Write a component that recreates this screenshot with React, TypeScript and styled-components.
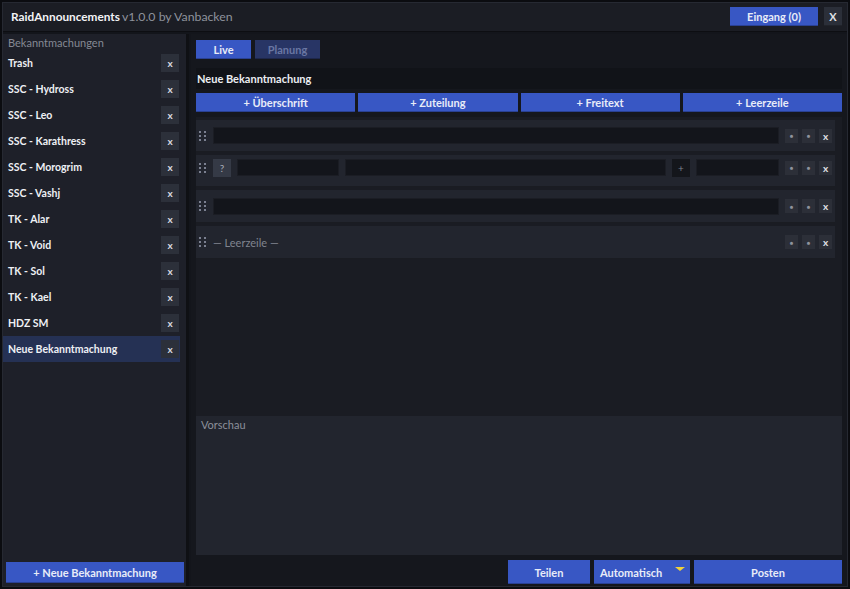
import React from "react";
import styled, { createGlobalStyle } from "styled-components";

const GlobalStyle = createGlobalStyle`
  html, body {
    margin: 0;
    padding: 0;
    background: #0b0c10;
  }
  body {
    font-family: "Lato", "Open Sans", "Liberation Sans", sans-serif;
    color: #e6e8ee;
  }
  * { box-sizing: border-box; }
`;

const BLUE = "#3857c4";

const Window = styled.div`
  width: 846px;
  height: 585px;
  margin: 2px;
  display: flex;
  flex-direction: column;
  background: #13151b;
  border: 1px solid #262932;
`;

const TitleBar = styled.div`
  height: 29px;
  display: flex;
  align-items: center;
  padding: 0 5px 1px 8px;
  background: #1b1d24;
  border-bottom: 1px solid #0d0e12;
`;

const Title = styled.div`
  flex: 1;
  font-size: 11.8px;
  font-weight: 700;
  color: #f2f3f6;
`;

const TitleMeta = styled.span`
  font-size: 12.3px;
  font-weight: 400;
  color: #8e929c;
  margin-left: 2px;
`;

const Button = styled.button<{ $tone?: "blue" | "dim" | "dark"; $w?: number }>`
  height: 19px;
  ${({ $w }) => ($w ? `width: ${$w}px;` : "")}
  border: none;
  padding: 0;
  font-family: inherit;
  font-size: 11px;
  font-weight: 700;
  display: flex;
  align-items: center;
  justify-content: center;
  background: ${({ $tone }) =>
    $tone === "dim" ? "#283565" : $tone === "dark" ? "#2b2f39" : BLUE};
  color: ${({ $tone }) =>
    $tone === "dim" ? "#6a77a3" : $tone === "dark" ? "#dfe1e6" : "#e8ecf8"};
  box-shadow: inset 0 -1px 0 rgba(0, 0, 0, 0.25);
`;

const TitleButtons = styled.div`
  display: flex;
  gap: 6px;
`;

const Body = styled.div`
  flex: 1;
  display: flex;
  gap: 2px;
  padding-top: 2px;
  min-height: 0;
`;

const Sidebar = styled.div`
  width: 186px;
  display: flex;
  flex-direction: column;
  background: #1e2029;
  border-right: 3px solid #0f1014;
  padding-bottom: 3px;
`;

const SideHeader = styled.div`
  font-size: 11px;
  color: #858994;
  padding: 2px 0 0 5px;
  height: 16px;
`;

const List = styled.div`
  flex: 1;
  display: flex;
  flex-direction: column;
  padding-right: 6px;
`;

const Item = styled.div<{ $active?: boolean }>`
  height: 26px;
  display: flex;
  align-items: center;
  justify-content: space-between;
  padding: 0 1px 0 5px;
  font-size: 10.5px;
  font-weight: 700;
  color: #eef0f4;
  background: ${({ $active }) => ($active ? "#253154" : "transparent")};
`;

const SmallX = styled.div`
  width: 18px;
  height: 18px;
  background: #2c303a;
  color: #d9dbe0;
  font-size: 10px;
  font-weight: 700;
  display: flex;
  align-items: center;
  justify-content: center;
`;

const SideFooter = styled.div`
  padding: 0 2px 0 3px;
`;

const Main = styled.div`
  flex: 1;
  display: flex;
  flex-direction: column;
  padding: 6px 5px 2px 5px;
  background: #15171d;
`;

const Tabs = styled.div`
  display: flex;
  gap: 4px;
  height: 19px;
`;

const SectionTitle = styled.div`
  margin-top: 9px;
  height: 21px;
  display: flex;
  align-items: center;
  padding-left: 1px;
  font-size: 11px;
  font-weight: 700;
  color: #eceef2;
  background: #111318;
`;

const AddRow = styled.div`
  margin-top: 4px;
  display: grid;
  grid-template-columns: repeat(4, 1fr);
  gap: 3px;
`;

const Editor = styled.div`
  margin-top: 5px;
  height: 299px;
  background: #1a1c23;
  display: flex;
  flex-direction: column;
  gap: 3px;
  padding: 3px 7px 0 0;
`;

const Row = styled.div<{ $h: number; $pb?: number }>`
  height: ${({ $h }) => $h}px;
  flex: none;
  display: flex;
  align-items: center;
  gap: 6px;
  padding: 0 3px ${({ $pb }) => $pb ?? 0}px 3px;
  background: #22252e;
  border-bottom: 1px solid #1a1c22;
`;

const Grip = styled.div`
  width: 8px;
  display: grid;
  grid-template-columns: 2px 2px;
  column-gap: 3px;
  row-gap: 2px;
  & > span {
    width: 2px;
    height: 2px;
    background: #7b8090;
  }
`;

const Field = styled.div<{ $w?: number }>`
  height: 17px;
  ${({ $w }) => ($w ? `width: ${$w}px; flex: none;` : "flex: 1;")}
  background: #13151b;
  border: 1px solid #1b1d24;
`;

const Square = styled.div<{ $bg: string; $fg: string }>`
  width: 18px;
  height: 18px;
  flex: none;
  background: ${({ $bg }) => $bg};
  color: ${({ $fg }) => $fg};
  font-size: 10px;
  display: flex;
  align-items: center;
  justify-content: center;
`;

const Ctrls = styled.div`
  display: flex;
  gap: 4px;
`;

const Ctrl = styled.div`
  width: 13px;
  height: 14px;
  background: #2c2f38;
  color: #8f939d;
  font-size: 6px;
  font-weight: 700;
  display: flex;
  align-items: center;
  justify-content: center;
`;

const CtrlX = styled(Ctrl)`
  font-size: 10px;
  color: #e0e2e7;
`;

const Placeholder = styled.div`
  flex: 1;
  font-size: 11px;
  color: #80848f;
`;

const Preview = styled.div`
  flex: 1;
  background: #22252e;
  padding: 2px 5px;
  font-size: 11px;
  color: #8c909b;
`;

const BottomBar = styled.div`
  margin-top: 5px;
  display: flex;
  justify-content: flex-end;
  gap: 4px;
  height: 24px;
`;

const BigButton = styled(Button)`
  height: 24px;
`;

const Dropdown = styled(BigButton)`
  justify-content: flex-start;
  padding-left: 6px;
  position: relative;
`;

const Caret = styled.span`
  position: absolute;
  right: 5px;
  top: 7px;
  width: 0;
  height: 0;
  border-left: 5px solid transparent;
  border-right: 5px solid transparent;
  border-top: 4px solid #f2d23a;
`;

const announcements = [
  "Trash",
  "SSC - Hydross",
  "SSC - Leo",
  "SSC - Karathress",
  "SSC - Morogrim",
  "SSC - Vashj",
  "TK - Alar",
  "TK - Void",
  "TK - Sol",
  "TK - Kael",
  "HDZ SM",
  "Neue Bekanntmachung",
];

const GripDots = () => (
  <Grip>
    {Array.from({ length: 6 }).map((_, i) => (
      <span key={i} />
    ))}
  </Grip>
);

const RowControls = () => (
  <Ctrls>
    <Ctrl>●</Ctrl>
    <Ctrl>●</Ctrl>
    <CtrlX>x</CtrlX>
  </Ctrls>
);

export default function App() {
  return (
    <>
      <GlobalStyle />
      <Window>
        <TitleBar>
          <Title>
            RaidAnnouncements<TitleMeta>v1.0.0 by Vanbacken</TitleMeta>
          </Title>
          <TitleButtons>
            <Button $w={88}>Eingang (0)</Button>
            <Button $tone="dark" $w={18}>
              X
            </Button>
          </TitleButtons>
        </TitleBar>
        <Body>
          <Sidebar>
            <SideHeader>Bekanntmachungen</SideHeader>
            <List>
              {announcements.map((name, i) => (
                <Item key={name} $active={i === announcements.length - 1}>
                  {name}
                  <SmallX>x</SmallX>
                </Item>
              ))}
            </List>
            <SideFooter>
              <Button style={{ height: 21, width: "100%" }}>+ Neue Bekanntmachung</Button>
            </SideFooter>
          </Sidebar>
          <Main>
            <Tabs>
              <Button $w={55}>Live</Button>
              <Button $tone="dim" $w={65}>
                Planung
              </Button>
            </Tabs>
            <SectionTitle>Neue Bekanntmachung</SectionTitle>
            <AddRow>
              <Button>+ Überschrift</Button>
              <Button>+ Zuteilung</Button>
              <Button>+ Freitext</Button>
              <Button>+ Leerzeile</Button>
            </AddRow>
            <Editor>
              <Row $h={32}>
                <GripDots />
                <Field />
                <RowControls />
              </Row>
              <Row $h={32} $pb={6}>
                <GripDots />
                <Square $bg="#353a46" $fg="#a9adb7">?</Square>
                <Field $w={102} />
                <Field />
                <Square $bg="#14161b" $fg="#7e828c">+</Square>
                <Field $w={83} />
                <RowControls />
              </Row>
              <Row $h={33}>
                <GripDots />
                <Field />
                <RowControls />
              </Row>
              <Row $h={33}>
                <GripDots />
                <Placeholder>— Leerzeile —</Placeholder>
                <RowControls />
              </Row>
            </Editor>
            <Preview>Vorschau</Preview>
            <BottomBar>
              <BigButton $w={82}>Teilen</BigButton>
              <Dropdown $w={96}>
                Automatisch
                <Caret />
              </Dropdown>
              <BigButton $w={148}>Posten</BigButton>
            </BottomBar>
          </Main>
        </Body>
      </Window>
    </>
  );
}
